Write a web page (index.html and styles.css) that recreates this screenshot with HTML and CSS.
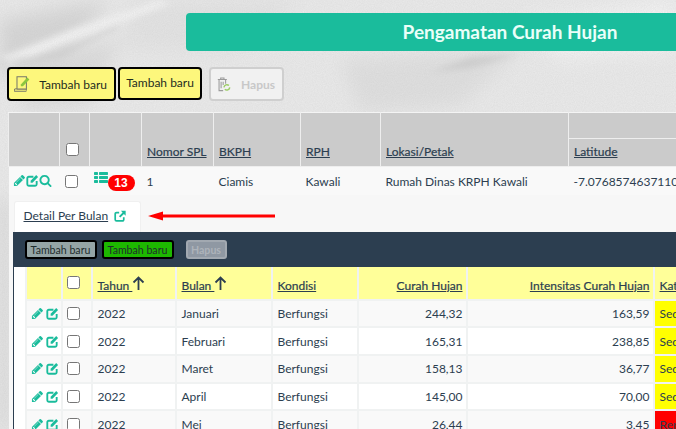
FILE: index.html
```html
<!DOCTYPE html>
<html lang="en">
<head>
    <meta charset="UTF-8">
    <meta name="viewport" content="width=device-width, initial-scale=1.0">
    <title>Pengamatan Curah Hujan</title>
    <link rel="stylesheet" href="styles.css">
</head>
<body>
    <svg class="paper" width="676" height="429" viewBox="0 0 676 429" aria-hidden="true">
        <defs>
            <filter id="soft" x="-30%" y="-30%" width="160%" height="160%"><feGaussianBlur stdDeviation="9"/></filter>
            <filter id="softer" x="-30%" y="-30%" width="160%" height="160%"><feGaussianBlur stdDeviation="3"/></filter>
            <filter id="grain"><feTurbulence type="fractalNoise" baseFrequency="0.9" numOctaves="2"/><feColorMatrix values="0 0 0 0 0.5  0 0 0 0 0.5  0 0 0 0 0.5  0 0 0 0.28 0"/></filter>
            <symbol id="i-pencil" viewBox="0 0 1792 1792"><path d="M491 1536l91-91-235-235-91 91v107h128v128h107zm523-928q0-22-22-22-10 0-17 7l-542 542q-7 7-7 17 0 22 22 22 10 0 17-7l542-542q7-7 7-17zm-54-192l416 416-832 832h-416v-416zm683 96q0 53-37 90l-166 166-416-416 166-165q36-38 90-38 53 0 91 38l235 234q37 39 37 91z"/></symbol>
            <symbol id="i-search" viewBox="0 0 1792 1792"><path d="M1216 832q0-185-131.5-316.5t-316.5-131.5-316.5 131.5-131.5 316.5 131.5 316.5 316.5 131.5 316.5-131.5 131.5-316.5zm512 832q0 52-38 90t-90 38q-54 0-90-38l-343-342q-179 124-399 124-143 0-273.5-55.5t-225-150-150-225-55.5-273.5 55.5-273.5 150-225 225-150 273.5-55.5 273.5 55.5 225 150 150 225 55.5 273.5q0 220-124 399l343 343q37 37 37 90z"/></symbol>
            <symbol id="i-list" viewBox="0 0 1792 1792"><path d="M512 1248v192q0 40-28 68t-68 28h-320q-40 0-68-28t-28-68v-192q0-40 28-68t68-28h320q40 0 68 28t28 68zm0-512v192q0 40-28 68t-68 28h-320q-40 0-68-28t-28-68v-192q0-40 28-68t68-28h320q40 0 68 28t28 68zm1280 512v192q0 40-28 68t-68 28h-960q-40 0-68-28t-28-68v-192q0-40 28-68t68-28h960q40 0 68 28t28 68zm-1280-1024v192q0 40-28 68t-68 28h-320q-40 0-68-28t-28-68v-192q0-40 28-68t68-28h320q40 0 68 28t28 68zm1280 512v192q0 40-28 68t-68 28h-960q-40 0-68-28t-28-68v-192q0-40 28-68t68-28h960q40 0 68 28t28 68zm0-512v192q0 40-28 68t-68 28h-960q-40 0-68-28t-28-68v-192q0-40 28-68t68-28h960q40 0 68 28t28 68z"/></symbol>
            <symbol id="i-edit" viewBox="0 0 14 14"><path d="M11.500 7.500V11a1.600 1.600 0 0 1-1.600 1.600H3A1.600 1.600 0 0 1 1.400 11V4.600A1.600 1.600 0 0 1 3 3h5" fill="none" stroke="currentColor" stroke-width="2"/><path d="M5 9.400V7.200L11 1.200l2 2-6 6.200z" fill="currentColor"/></symbol>
            <symbol id="i-share" viewBox="0 0 14 14"><path d="M11.400 8.400v2.800A1.600 1.600 0 0 1 9.800 12.800H3A1.600 1.600 0 0 1 1.400 11.200V4.600A1.600 1.600 0 0 1 3 3h3" fill="none" stroke="currentColor" stroke-width="2"/><path d="M8 1h5.600v5.600l-2-2-4.200 4.200-1.600-1.600L10 3z" fill="currentColor"/></symbol>
            <symbol id="i-up" viewBox="0 0 13 14"><path d="M6.500 14V1.500M1.500 6.500l5-5 5 5" fill="none" stroke="currentColor" stroke-width="1.800"/></symbol>
        </defs>
        <rect width="676" height="429" fill="#ebebeb"/>
        <g filter="url(#soft)">
            <path d="M0 20L110 0L60 60L0 80z" fill="#d6d6d6"/>
            <path d="M30 60L120 40L90 105L20 112z" fill="#dcdcdc"/>
            <path d="M130 0H300L240 50L120 50z" fill="#e4e4e4"/>
            <path d="M340 60L520 50L460 105L360 112z" fill="#e0e0e0"/>
            <path d="M520 20L676 0V50L560 60z" fill="#f5f5f5"/>
            <path d="M0 200H8V429H0z" fill="#cfcfcf"/>
        </g>
        <g filter="url(#softer)">
            <path d="M0 58L70 30L160 0L170 4L80 38L8 66z" fill="#f4f4f4"/>
            <path d="M0 62L60 55L118 26" fill="none" stroke="#c6c6c6" stroke-width="2"/>
            <path d="M430 72L470 58L520 54L470 68z" fill="#cfcfcf"/>
        </g>
        <rect width="676" height="429" filter="url(#grain)"/>
    </svg>

    <main class="page">
        <h1 class="title">Pengamatan Curah Hujan</h1>

        <div class="toolbar">
            <button class="btn btn-note">
                <svg width="19" height="20" viewBox="0 0 19 20">
                    <path d="M3.500 16V1.500H14.500V17.500M0.500 18.500H14.500M0.500 18.500a2 2 0 0 1 3-2.500h11" fill="none" stroke="#77776a" stroke-width="1.200"/>
                    <path d="M8 10.500L15.500 2.500l2.500 2.200-7.500 8H8z" fill="#8cc63f"/>
                </svg>
                <span>Tambah baru</span>
            </button>
            <button class="btn btn-plain">Tambah baru</button>
            <button class="btn btn-off">
                <svg width="17" height="19" viewBox="0 0 17 19">
                    <path d="M1 3.500h11M4.500 3.500V1.500h4v2M2.500 3.500V17h5M10.500 3.500v5M5 6v8M7.500 6v4" fill="none" stroke="#9b9b9b" stroke-width="1.300"/>
                    <path d="M8.500 13a3.500 3.500 0 0 1 6-2.200M15.500 13a3.500 3.500 0 0 1-6 2.200" fill="none" stroke="#9ccc65" stroke-width="1.800"/>
                </svg>
                <span>Hapus</span>
            </button>
        </div>

        <table class="grid">
            <thead>
                <tr>
                    <th class="c-act" rowspan="2"></th>
                    <th class="c-chk" rowspan="2"><input type="checkbox"></th>
                    <th class="c-sub" rowspan="2"></th>
                    <th class="c-spl" rowspan="2"><a href="#">Nomor SPL</a></th>
                    <th class="c-bkph" rowspan="2"><a href="#">BKPH</a></th>
                    <th class="c-rph" rowspan="2"><a href="#">RPH</a></th>
                    <th class="c-lok" rowspan="2"><a href="#">Lokasi/Petak</a></th>
                    <th class="c-group"></th>
                </tr>
                <tr>
                    <th class="c-lat"><a href="#">Latitude</a></th>
                </tr>
            </thead>
            <tbody>
                <tr class="main-row">
                    <td class="icons">
                        <svg class="ico" width="13" height="13"><use href="#i-pencil"/></svg>
                        <svg class="ico" width="13" height="13"><use href="#i-edit"/></svg>
                        <svg class="ico" width="13" height="13"><use href="#i-search"/></svg>
                    </td>
                    <td class="cell-chk"><input type="checkbox"></td>
                    <td class="cell-sub">
                        <svg class="ico ico-list" width="14" height="14"><use href="#i-list"/></svg>
                        <span class="badge">13</span>
                    </td>
                    <td>1</td>
                    <td>Ciamis</td>
                    <td>Kawali</td>
                    <td>Rumah Dinas KRPH Kawali</td>
                    <td>-7.0768574637110</td>
                </tr>
                <tr>
                    <td class="detail" colspan="8">
                        <div class="tabs">
                            <a class="tab" href="#">
                                <span class="tab-link">Detail Per Bulan</span>
                                <svg class="ico" width="12" height="12"><use href="#i-share"/></svg>
                            </a>
                        </div>
                        <svg class="pointer" width="128" height="10" viewBox="0 0 128 10">
                            <path d="M0 5L15 0.500V3.500H127V6.500H15V9.500z" fill="#f00"/>
                        </svg>
                        <div class="panel">
                            <div class="panel-bar">
                                <button class="mini mini-gray">Tambah baru</button>
                                <button class="mini mini-green">Tambah baru</button>
                                <button class="mini mini-off">Hapus</button>
                            </div>
                            <div class="panel-body">
                                <table class="sub">
                                    <thead>
                                        <tr>
                                            <th class="s-act"></th>
                                            <th class="s-chk"><input type="checkbox"></th>
                                            <th class="s-year"><a href="#">Tahun <svg width="13" height="14"><use href="#i-up"/></svg></a></th>
                                            <th class="s-month"><a href="#">Bulan <svg width="13" height="14"><use href="#i-up"/></svg></a></th>
                                            <th class="s-cond"><a href="#">Kondisi</a></th>
                                            <th class="s-rain num"><a href="#">Curah Hujan</a></th>
                                            <th class="s-int num"><a href="#">Intensitas Curah Hujan</a></th>
                                            <th class="s-cat"><a href="#">Kategori</a></th>
                                        </tr>
                                    </thead>
                                    <tbody>
                                        <tr>
                                            <td class="icons"><svg class="ico" width="13" height="13"><use href="#i-pencil"/></svg> <svg class="ico" width="13" height="13"><use href="#i-edit"/></svg></td>
                                            <td class="cell-chk"><input type="checkbox"></td>
                                            <td>2022</td><td>Januari</td><td>Berfungsi</td>
                                            <td class="num">244,32</td><td class="num">163,59</td>
                                            <td class="cat-mid">Sedang</td>
                                        </tr>
                                        <tr>
                                            <td class="icons"><svg class="ico" width="13" height="13"><use href="#i-pencil"/></svg> <svg class="ico" width="13" height="13"><use href="#i-edit"/></svg></td>
                                            <td class="cell-chk"><input type="checkbox"></td>
                                            <td>2022</td><td>Februari</td><td>Berfungsi</td>
                                            <td class="num">165,31</td><td class="num">238,85</td>
                                            <td class="cat-mid">Sedang</td>
                                        </tr>
                                        <tr>
                                            <td class="icons"><svg class="ico" width="13" height="13"><use href="#i-pencil"/></svg> <svg class="ico" width="13" height="13"><use href="#i-edit"/></svg></td>
                                            <td class="cell-chk"><input type="checkbox"></td>
                                            <td>2022</td><td>Maret</td><td>Berfungsi</td>
                                            <td class="num">158,13</td><td class="num">36,77</td>
                                            <td class="cat-mid">Sedang</td>
                                        </tr>
                                        <tr>
                                            <td class="icons"><svg class="ico" width="13" height="13"><use href="#i-pencil"/></svg> <svg class="ico" width="13" height="13"><use href="#i-edit"/></svg></td>
                                            <td class="cell-chk"><input type="checkbox"></td>
                                            <td>2022</td><td>April</td><td>Berfungsi</td>
                                            <td class="num">145,00</td><td class="num">70,00</td>
                                            <td class="cat-mid">Sedang</td>
                                        </tr>
                                        <tr>
                                            <td class="icons"><svg class="ico" width="13" height="13"><use href="#i-pencil"/></svg> <svg class="ico" width="13" height="13"><use href="#i-edit"/></svg></td>
                                            <td class="cell-chk"><input type="checkbox"></td>
                                            <td>2022</td><td>Mei</td><td>Berfungsi</td>
                                            <td class="num">26,44</td><td class="num">3,45</td>
                                            <td class="cat-low">Rendah</td>
                                        </tr>
                                    </tbody>
                                </table>
                            </div>
                        </div>
                    </td>
                </tr>
            </tbody>
        </table>
    </main>
</body>
</html>
```

FILE: styles.css
```css
html, body {
    margin: 0;
    height: 429px;
    overflow: hidden;
}
body {
    font-family: Lato, "Open Sans", sans-serif;
    font-size: 12px;
    color: #2c3e50;
    position: relative;
}
a {
    color: #2c3e50;
}
th, td {
    box-sizing: border-box;
}
input[type="checkbox"] {
    margin: 0;
    width: 13px;
    height: 13px;
    display: block;
}
.paper {
    position: absolute;
    top: 0;
    left: 0;
    z-index: -1;
}
.page {
    padding: 13px 0 0 8px;
    width: 1100px;
}
.title {
    margin: 0 0 0 178px;
    width: 648px;
    height: 38px;
    line-height: 38px;
    background-color: #1abc9c;
    border-radius: 4px;
    color: #eafff9;
    font-size: 19px;
    font-weight: 700;
    text-align: center;
}

/* toolbar */
.toolbar {
    display: flex;
    align-items: flex-start;
    margin: 16px 0 0 -1px;
}
.btn {
    box-sizing: border-box;
    display: flex;
    align-items: center;
    height: 34px;
    padding: 0 7px;
    border: 2px solid #000;
    border-radius: 4px;
    background-color: #fdf77c;
    color: #1f2d1f;
    font-family: inherit;
    font-size: 12px;
    white-space: nowrap;
}
.btn-note {
    width: 109px;
    gap: 9px;
    padding-left: 5px;
}
.btn-plain {
    width: 84px;
    height: 33px;
    margin-left: 2px;
    justify-content: center;
    padding: 0 0 3px;
}
.btn-off {
    width: 75px;
    margin-left: 7px;
    gap: 10px;
    padding-left: 6px;
    border-color: #cfcfcf;
    background-color: #f1f1f1;
    color: #c8c8c8;
    font-weight: 700;
}

/* main table */
.grid, .sub {
    border-collapse: collapse;
    table-layout: fixed;
}
.grid {
    margin-top: 11px;
    width: 800px;
}
.grid > thead th {
    background-color: #cbcbcb;
    border: 1px solid #eeeeee;
    border-top: 1px solid #f4f4f4;
    padding: 0 5px 7px;
    vertical-align: bottom;
    text-align: left;
    font-weight: 400;
    white-space: nowrap;
}
.grid > thead .c-group {
    height: 26px;
    padding: 0;
}
.grid > thead .c-lat {
    height: 28px;
}
.grid > thead a, .sub > thead a {
    font-weight: 400;
    -webkit-text-stroke: 0.2px #2c3e50;
}
.c-act { width: 51px; }
.c-chk { width: 30px; }
.c-sub { width: 52px; }
.c-spl { width: 72px; }
.c-bkph { width: 87px; }
.c-rph { width: 80px; }
.c-lok { width: 188px; }
.c-group { width: 240px; }
.grid > thead .c-chk input {
    margin-left: 1px;
    margin-bottom: 3px;
}
.main-row td {
    background-color: #f9f9f9;
    height: 28px;
    padding: 1px 5px 0;
    vertical-align: middle;
    white-space: nowrap;
    overflow: hidden;
    border-bottom: 0;
}
.ico {
    color: #1abc9c;
    fill: currentColor;
    vertical-align: -2px;
}
.main-row .icons {
    padding: 0 0 0 4px;
    font-size: 0;
}
.main-row .cell-sub {
    padding: 0 0 0 4px;
    font-size: 0;
}
.main-row .ico-list {
    vertical-align: -2px;
}
.badge {
    display: inline-block;
    width: 27px;
    height: 16px;
    line-height: 16px;
    border-radius: 8px;
    background-color: #f00;
    color: #fff;
    font-family: "Liberation Sans", sans-serif;
    font-size: 12px;
    font-weight: 700;
    text-align: center;
    vertical-align: -4px;
}

/* detail row */
.detail {
    position: relative;
    background-color: #f7f7f7;
    padding: 6px 0 0 4px;
}
.tabs {
    display: flex;
    padding-left: 1px;
    height: 31px;
}
.tab {
    box-sizing: border-box;
    display: flex;
    align-items: center;
    gap: 6px;
    width: 127px;
    padding: 0 0 2px 9px;
    background-color: #fff;
    border: 1px solid #f0f0f0;
    border-bottom: 0;
    border-radius: 3px 3px 0 0;
    text-decoration: none;
}
.tab-link {
    text-decoration: underline;
}
.pointer {
    position: absolute;
    left: 139px;
    top: 16px;
}
.panel-bar {
    display: flex;
    align-items: center;
    height: 35px;
    padding-left: 12px;
    background-color: #2c3e50;
}
.mini {
    box-sizing: border-box;
    width: 72px;
    height: 19px;
    padding: 1px 0 0;
    border: 2px solid #000;
    border-radius: 3px;
    font-family: inherit;
    font-size: 10.600px;
    line-height: 14px;
    color: #1f2d2d;
    white-space: nowrap;
}
.mini-gray { background-color: #95a5a6; }
.mini-green {
    background-color: #1db800;
    margin-left: 5px;
}
.mini-off {
    width: 41px;
    margin-left: 12px;
    border-color: #a2a9b1;
    background-color: #8f98a3;
    color: #adb3ba;
    font-weight: 700;
}
.panel-body {
    background-color: #fff;
    border-left: 1px solid #2c3e50;
    padding-left: 11px;
}
.sub {
    width: 743px;
}
.sub th, .sub td {
    border: 2px solid #f0f2f2;
    padding: 0 5px;
    white-space: nowrap;
    overflow: hidden;
}
.sub > thead th {
    background-color: #ffff99;
    border-top: 0;
    height: 33px;
    padding-bottom: 6px;
    font-weight: 400;
    text-align: left;
    vertical-align: bottom;
}
.sub > thead .s-chk {
    padding: 0 0 0 4px;
    vertical-align: middle;
}
.sub > thead svg {
    vertical-align: 0;
}
.sub > thead .num, .sub .num {
    text-align: right;
    padding-right: 3px;
}
.sub tbody tr {
    height: 27.700px;
}
.sub tbody tr:nth-child(odd) td {
    background-color: #f9f9f9;
}
.sub .icons {
    padding: 0 0 0 4px;
    font-size: 0;
}
.sub .icons svg + svg {
    margin-left: 2px;
}
.sub .cell-chk {
    padding: 0 0 0 4px;
}
.s-act { width: 36px; }
.s-chk { width: 30px; }
.s-year { width: 84px; }
.s-month { width: 96px; }
.s-cond { width: 86px; }
.s-rain { width: 109px; }
.s-int { width: 187px; }
.s-cat { width: 113px; }
.sub tbody tr td.cat-mid { background-color: #ff0; }
.sub tbody tr td.cat-low { background-color: #f00; }
```
